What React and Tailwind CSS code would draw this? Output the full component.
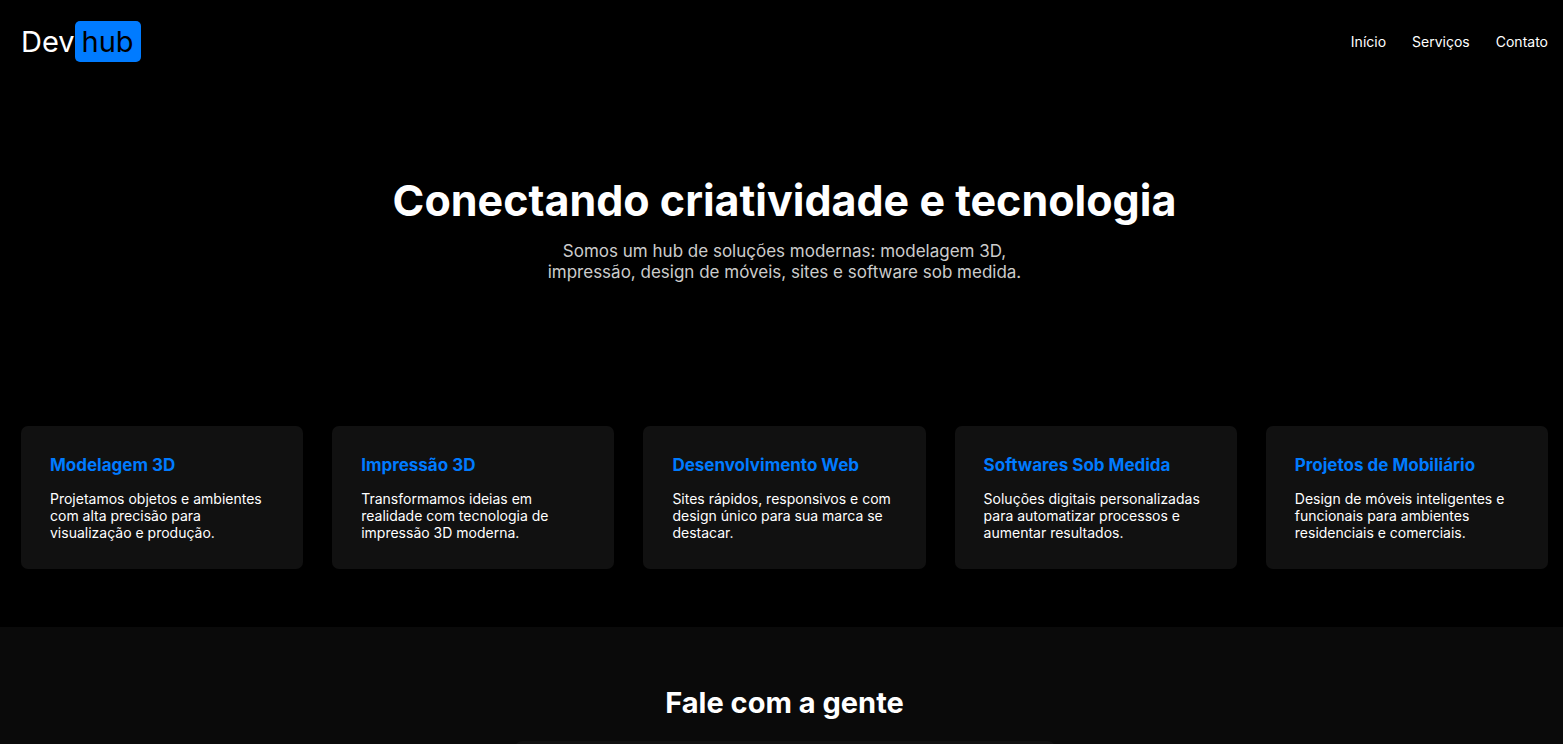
const links = [
  { label: "Início", href: "#inicio" },
  { label: "Serviços", href: "#servicos" },
  { label: "Contato", href: "#contato" },
];

const services = [
  { title: "Modelagem 3D", text: "Projetamos objetos e ambientes com alta precisão para visualização e produção." },
  { title: "Impressão 3D", text: "Transformamos ideias em realidade com tecnologia de impressão 3D moderna." },
  { title: "Desenvolvimento Web", text: "Sites rápidos, responsivos e com design único para sua marca se destacar." },
  { title: "Softwares Sob Medida", text: "Soluções digitais personalizadas para automatizar processos e aumentar resultados." },
  { title: "Projetos de Mobiliário", text: "Design de móveis inteligentes e funcionais para ambientes residenciais e comerciais." },
];

function Header() {
  return (
    <header className="flex items-center justify-between pt-[21px] pr-[15px] pl-[21px]">
      <a href="#inicio" className="flex items-center text-[29px] leading-[35px]">
        Dev
        <span className="rounded-[5px] bg-[#007bff] px-[7px] py-[3px] text-black">hub</span>
      </a>
      <nav className="flex gap-[26px] text-[14px] leading-[17px]">
        {links.map((link) => (
          <a key={link.href} href={link.href}>{link.label}</a>
        ))}
      </nav>
    </header>
  );
}

function ServiceCard({ title, text }) {
  return (
    <article className="rounded-[7px] bg-[#111] px-[29px] pt-[29px] pb-[28px]">
      <h2 className="text-[17px] leading-[20px] font-bold text-[#007bff]">{title}</h2>
      <p className="mt-[15px] text-[14px] leading-[17px]">{text}</p>
    </article>
  );
}

export default function App() {
  return (
    <div className="h-screen overflow-hidden bg-black font-['Inter',sans-serif] text-white">
      <Header />
      <main>
        <section id="inicio" className="flex flex-col items-center pt-[112px] pr-[15px] pl-[21px] text-center">
          <h1 className="text-[43px] leading-[53px] font-bold">Conectando criatividade e tecnologia</h1>
          <p className="mt-[14px] max-w-[520px] text-[17px] leading-[21px] text-[#ccc]">
            Somos um hub de soluções modernas: modelagem 3D, impressão, design de móveis, sites e software sob medida.
          </p>
        </section>
        <section id="servicos" className="grid grid-cols-5 gap-[29px] pt-[143px] pr-[15px] pb-[58px] pl-[21px]">
          {services.map((service) => (
            <ServiceCard key={service.title} {...service} />
          ))}
        </section>
        <section id="contato" className="flex flex-col items-center bg-[#0a0a0a] pt-[58px] pr-[15px] pb-[58px] pl-[21px]">
          <h2 className="text-[29px] leading-[35px] font-bold">Fale com a gente</h2>
          <div className="mt-[21px] h-[360px] w-full max-w-[540px] rounded-[7px] bg-[#111]" />
        </section>
      </main>
    </div>
  );
}
